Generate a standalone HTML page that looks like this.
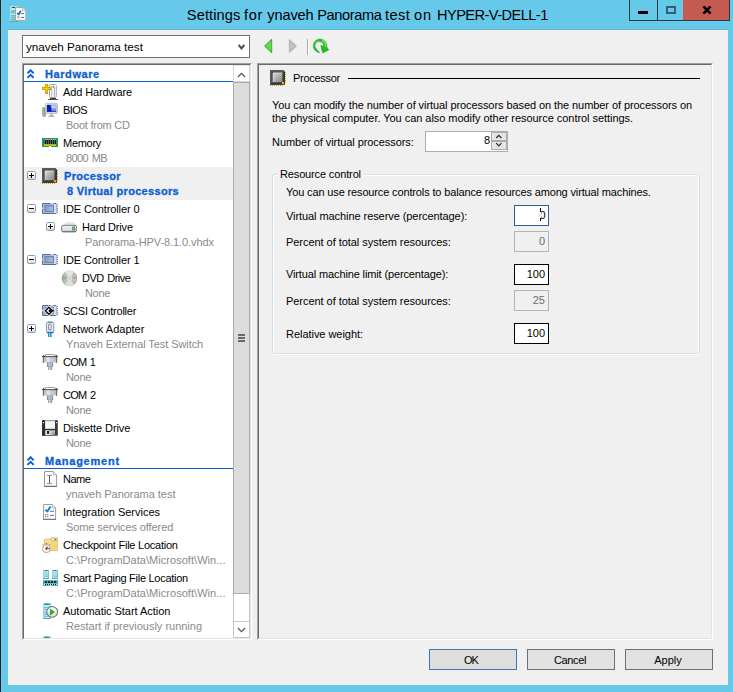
<!DOCTYPE html>
<html>
<head>
<meta charset="utf-8">
<title>Settings for ynaveh Panorama test on HYPER-V-DELL-1</title>
<style>
*{box-sizing:border-box;margin:0;padding:0}
html,body{width:733px;height:692px;overflow:hidden}
body{background:#66c9e9;font-family:"Liberation Sans",sans-serif;font-size:11px;color:#000;position:relative}
.abs{position:absolute}
#lb{left:0;top:0;width:1px;height:692px;background:#2a2222}
#title{left:187px;top:5px;width:364px;height:20px;font-size:14.6px;line-height:20px;white-space:nowrap;color:#000}
#client{left:8px;top:30px;width:720px;height:655px;background:#f0f0f0}
#caps{left:629px;top:0;width:101px;height:21px;border:1px solid #2b3a40;border-top:none}
#cmin{left:0;top:0;width:27px;height:20px}
#cmax{left:27px;top:0;width:26px;height:20px;border-left:1px solid #2b3a40}
#cclose{left:53px;top:0;width:46px;height:20px;background:#c55b50}
#combo{left:22px;top:35px;width:228px;height:23px;background:#fff;border:1px solid #707070}
#combo span{position:absolute;left:3px;top:0;line-height:22px;font-size:11.7px;white-space:nowrap}
#tree{left:22px;top:63px;width:230px;height:577px;background:#fff;border:1px solid #a0a0a0;border-right-color:#fff;border-bottom-color:#fff}
#treein{left:0;top:0;width:228px;height:575px;border:1px solid #696969;border-right-color:#e3e3e3;border-bottom-color:#e3e3e3;overflow:hidden}
.row{position:absolute;left:0;width:209px;height:18px;line-height:18px;white-space:nowrap}
.row.sel{background:#f0f0f0}
.row.sel .lbl,.row.sel .sub{color:#0b60d0;font-weight:bold;letter-spacing:.32px;-webkit-text-stroke:.3px #0b60d0}
.hdr{color:#0b60d0;font-weight:bold;height:17px;border-bottom:1px solid #0f5fcc}
.hdr .lbl{line-height:18px;letter-spacing:.35px;-webkit-text-stroke:.3px #0b60d0}
.lbl{position:absolute;top:0;line-height:18px;white-space:nowrap;letter-spacing:-.15px}
.sub{position:absolute;top:17px;line-height:15px;color:#8a8a8a;white-space:nowrap}
.ico{position:absolute;width:16px;height:16px;top:1px}
.pm{position:absolute;width:9px;height:9px;border:1px solid #7f9dc1;border-radius:1.5px;background:linear-gradient(#fff 45%,#dcd2c0);top:4px}
.pm:before{content:"";position:absolute;left:1px;top:3px;width:5px;height:1px;background:#000}
.pm.plus:after{content:"";position:absolute;left:3px;top:1px;width:1px;height:5px;background:#000}
#sb{left:209px;top:0;width:17px;height:573px;background:#fff;border-left:1px solid #c6c6c6;border-right:1px solid #c6c6c6}
#pane{left:257px;top:63px;width:456px;height:577px;border:1px solid #a0a0a0;border-right-color:#fff;border-bottom-color:#fff}
#panein{left:0;top:0;width:454px;height:575px;border:1px solid #696969;border-right-color:#e3e3e3;border-bottom-color:#e3e3e3}
.t{position:absolute;white-space:nowrap;line-height:14px;height:14px}
.inp{position:absolute;left:514px;width:35px;height:21px;background:#fff;border:1px solid #000;text-align:right;padding-right:3px;line-height:19px}
.inp.dis{background:#f0f0f0;border-color:#b4b4b4;color:#6d6d6d}
.btn{position:absolute;top:649px;width:88px;height:21px;background:#e1e1e1;border:1px solid #707070;text-align:center;line-height:21px}
#grp{left:272px;top:174px;width:428px;height:180px;border:1px solid #d5dfe5;border-radius:3px;box-shadow:inset 1px 1px 0 #fff,inset -1px 0 0 #fff,0 1px 0 #fff}

</style>
</head>
<body>
<div id="lb" class="abs"></div>
<div id="title" class="abs"><span style="position:absolute;left:-0.2px;letter-spacing:0.12px">Settings</span><span style="position:absolute;left:57.1px;letter-spacing:0.60px">for</span><span style="position:absolute;left:80.3px;letter-spacing:-0.13px">ynaveh</span><span style="position:absolute;left:130.2px;letter-spacing:-0.39px">Panorama</span><span style="position:absolute;left:198.0px;letter-spacing:0.44px">test</span><span style="position:absolute;left:226.9px;letter-spacing:0.9px">on</span><span style="position:absolute;left:250.0px;letter-spacing:-0.55px">HYPER-V-DELL-1</span></div>
<div id="caps" class="abs">
  <div id="cmin" class="abs"><div class="abs" style="left:8px;top:11px;width:10px;height:3px;background:#000"></div></div>
  <div id="cmax" class="abs"><div class="abs" style="left:8px;top:6px;width:10px;height:8px;border:2px solid #2e6273"></div></div>
  <div id="cclose" class="abs"><svg class="abs" style="left:19px;top:6px" width="10" height="8" viewBox="0 0 10 8"><path d="M1.4 0.4 L8.6 7.6 M8.6 0.4 L1.4 7.6" stroke="#000" stroke-width="2.5"/></svg></div>
</div>
<div class="abs" style="left:8px;top:29px;width:720px;height:1px;background:#62b6d6"></div>
<div id="client" class="abs"></div>
<svg class="abs" style="left:10px;top:6px" width="16" height="16" viewBox="0 0 16 16">
<rect x="0" y="0" width="7.8" height="16" fill="#a4e2ea"/>
<rect x="2" y="1" width="3.2" height="1" fill="#0e5a62"/>
<g fill="#3fa2aa"><rect x="1" y="4.4" width="6" height="0.9"/><rect x="1" y="6.4" width="6" height="0.9"/><rect x="1" y="9.4" width="6" height="0.9"/><rect x="1" y="11.4" width="6" height="0.9"/><rect x="1" y="13.4" width="6" height="0.9"/></g>
<rect x="1" y="2.8" width="5" height="0.9" fill="#e6f8fa"/><rect x="1" y="7.8" width="5" height="0.9" fill="#d8f4f6"/>
<rect x="0" y="15" width="7.8" height="1" fill="#5aaab2"/>
<path d="M5.6 1.6 H12.6 L15.8 4.8 V14.4 H5.6 Z" fill="#fefefe" stroke="#a29494" stroke-width="0.8"/>
<path d="M12.6 1.6 V4.8 H15.8" fill="#fff" stroke="#a8a0a0" stroke-width="0.8"/>
<path d="M7.4 6.9 L8.7 8.5 L10.8 4.6" fill="none" stroke="#1262b4" stroke-width="1.6" stroke-linejoin="round"/>
<rect x="11" y="7" width="3" height="1" fill="#6868a8"/><rect x="11" y="11" width="3" height="1" fill="#6868a8"/>
<rect x="7.8" y="10.4" width="1.8" height="1.8" fill="#e8e8e8" stroke="#b4b4b4" stroke-width="0.6"/>
</svg>
<svg class="abs" style="left:262px;top:37px" width="70" height="20" viewBox="0 0 70 20">
<path d="M2.6 9 L9.7 2.2 V15.8 Z" fill="#3ec62e" stroke="#2ca61c" stroke-width="0.9" stroke-linejoin="round"/>
<path d="M4.3 9 L8.7 4.8 V13.2 Z" fill="#58d446" stroke="#8be67a" stroke-width="0.7"/>
<path d="M27.3 2.4 L34.5 9 L27.3 15.8 Z" fill="#b8b8b8" stroke="#a8a8a8" stroke-width="0.6" stroke-linejoin="round"/>
<path d="M28.6 5.6 L32.4 9 L28.6 12.6 Z" fill="#c6c6c6"/>
<rect x="45" y="2" width="1" height="16" fill="#aaaaaa"/><rect x="46" y="2" width="1" height="16" fill="#fff"/>
</svg>

<svg class="abs" style="left:308px;top:34px" width="24" height="24" viewBox="0 0 24 24">
<path d="M12.1 18.7 A6.8 6.8 0 1 1 18.8 12.9 L20.7 16 L14.6 18.9 L12.8 11.4 L15.5 12.6 A4.3 4.3 0 1 0 8.7 15.2 Q10 17.6 12.1 18.7 Z" fill="#26ba26" stroke="#159a15" stroke-width="0.5" stroke-linejoin="round"/>
<path d="M13.8 6.5 A5.6 5.6 0 0 1 17.5 12.8" fill="none" stroke="#7df06c" stroke-width="1.5" opacity="0.85"/>
<path d="M6.6 12.6 A5.6 5.6 0 0 1 10.6 6.6" fill="none" stroke="#4fd84a" stroke-width="1" opacity="0.8"/>
</svg>
<div id="combo" class="abs"><span>ynaveh Panorama test</span>
<svg class="abs" style="left:215px;top:8px" width="7" height="7" viewBox="0 0 7 7"><path d="M0.6 0.9 L3.5 4.5 L6.4 0.9" fill="none" stroke="#4a4a4a" stroke-width="2"/></svg>
</div>

<div id="tree" class="abs"><div id="treein" class="abs">
<div class="row hdr" style="top:0px"><svg class="abs" style="left:3px;top:4px" width="8" height="10" viewBox="0 0 8 10"><path d="M0.5 4.4 L3.6 1.3 L6.7 4.4 M0.5 8.9 L3.6 5.8 L6.7 8.9" fill="none" stroke="#0b60d0" stroke-width="2"/></svg><span class="lbl" style="left:21px;letter-spacing:0.583px">Hardware</span></div>
<div class="row" style="top:18px;height:18px"><svg class="ico" style="left:18px" width="16" height="16" viewBox="0 0 16 16">
<rect x="7.5" y="0.5" width="6.8" height="13" rx="0.8" fill="#fafafa" stroke="#a8a8a8"/>
<rect x="9" y="2" width="1" height="11" fill="#c4c4c4"/><rect x="12" y="3" width="1" height="10" fill="#b4b4b4"/><rect x="10" y="4" width="2" height="9" fill="#ededf2"/>
<rect x="10.4" y="1.8" width="1.7" height="1.9" fill="#58c030"/>
<rect x="8" y="14" width="6" height="1" fill="#3a3a3a"/><rect x="6" y="15" width="10" height="1" fill="#555"/>
<path d="M4.5 0.6 V8.4 M0.6 4.5 H8" stroke="#b89208" stroke-width="3.2" stroke-linecap="round"/>
<path d="M4.5 1 V8 M1 4.5 H7.6" stroke="#fbd10c" stroke-width="1.7" stroke-linecap="round"/>
</svg><span class="lbl" style="left:39px;letter-spacing:-0.109px">Add Hardware</span></div>
<div class="row" style="top:36px;height:33px"><svg class="ico" style="left:18px" width="16" height="16" viewBox="0 0 16 16">
<rect x="0.6" y="5.4" width="2.9" height="9.2" rx="1.2" fill="#cfcfcf" stroke="#8e8e8e" stroke-width="0.8"/>
<rect x="1.7" y="6.2" width="1" height="7.4" fill="#7a7a7a"/>
<rect x="1" y="7.9" width="2.2" height="1.3" fill="#30e830"/>
<rect x="8.4" y="11" width="2.4" height="2.6" fill="#bdbdbd"/>
<path d="M6.2 15 L7.6 13.3 H11.4 L12.8 15 Z" fill="#b0b0b0"/>
<rect x="3.6" y="1.4" width="12" height="10" rx="1" fill="#dedad0" stroke="#bcb8ae" stroke-width="0.8"/>
<rect x="4.9" y="2.9" width="9.2" height="6.9" fill="#0a18c8"/>
<path d="M8.6 2.9 H14.1 V9.8 H9.8 Z" fill="#6f9cf0"/>
<path d="M9.3 3.3 H13.8 V6.2 H10 Z" fill="#b8d0fa"/>
<rect x="4.9" y="8.8" width="9.2" height="1" fill="#0810a0" opacity="0.6"/>
</svg><span class="lbl" style="left:39px;letter-spacing:-0.572px">BIOS</span><span class="sub" style="left:42px;letter-spacing:-0.252px">Boot from CD</span></div>
<div class="row" style="top:69px;height:33px"><svg class="ico" style="left:18px" width="16" height="16" viewBox="0 0 16 16">
<path d="M0 3 H16 V12 H9.2 L8.6 10.7 H7.4 L6.8 12 H0 Z" fill="#1b9b5c"/>
<rect x="2.2" y="5" width="11.8" height="4.2" fill="#8c8c8c"/>
<g fill="#050505"><rect x="2.7" y="4.8" width="1.2" height="4.4"/><rect x="4.7" y="4.8" width="1.2" height="4.4"/><rect x="6.7" y="4.8" width="1.2" height="4.4"/><rect x="8.7" y="4.8" width="1.2" height="4.4"/><rect x="10.7" y="4.8" width="1.2" height="4.4"/><rect x="12.7" y="4.8" width="1.2" height="4.4"/></g>
<g fill="#e8f4ec"><rect x="2.8" y="4" width="1" height="0.9"/><rect x="4.8" y="4" width="1" height="0.9"/><rect x="6.8" y="4" width="1" height="0.9"/><rect x="8.8" y="4" width="1" height="0.9"/><rect x="10.8" y="4" width="1" height="0.9"/><rect x="12.8" y="4" width="1" height="0.9"/></g>
<path d="M2 9.2 H14 V11 H9.2 L8.6 10.2 H7.4 L6.8 11 H2 Z" fill="#f2b81c"/>
</svg><span class="lbl" style="left:39px;letter-spacing:-0.287px">Memory</span><span class="sub" style="left:42px;letter-spacing:-0.589px;word-spacing:1.1px">8000 MB</span></div>
<div class="row sel" style="top:102px;height:33px"><i class="pm plus" style="left:3px"></i><svg class="ico" style="left:18px" width="16" height="16" viewBox="0 0 16 16">
<linearGradient id="gcpu4" x1="0" y1="0" x2="1" y2="1"><stop offset="0" stop-color="#dcdcdc"/><stop offset="1" stop-color="#848484"/></linearGradient>
<path d="M0 0 H13.2 L15 1.8 V14.7 H0 Z" fill="#4c4c4c"/>
<path d="M0 0 H13.2 L15 1.8 H1.5 V14.7 H0 Z" fill="#595959"/>
<path d="M0 14.7 H15 V1.8 L13.4 3.4 V13.2 H1.5 Z" fill="#303030"/>
<rect x="2.9" y="2.7" width="9.4" height="9.4" fill="url(#gcpu4)"/>
<path d="M3.2 12 V3 H12.2" fill="none" stroke="#ececec" stroke-width="0.7" opacity="0.8"/>
<rect x="12" y="12" width="2.3" height="2.3" fill="#f2a21e"/>
<g fill="#e39c1a"><rect x="0" y="15" width="1" height="1"/><rect x="2" y="15" width="1" height="1"/><rect x="4" y="15" width="1" height="1"/><rect x="6" y="15" width="1" height="1"/><rect x="8" y="15" width="1" height="1"/><rect x="10" y="15" width="1" height="1"/><rect x="12" y="15" width="1" height="1"/><rect x="15" y="2" width="1" height="1"/><rect x="15" y="4" width="1" height="1"/><rect x="15" y="6" width="1" height="1"/><rect x="15" y="8" width="1" height="1"/><rect x="15" y="10" width="1" height="1"/><rect x="15" y="12" width="1" height="1"/></g>
</svg><span class="lbl" style="left:40px;letter-spacing:0.332px">Processor</span><span class="sub" style="left:43px;letter-spacing:0.322px">8 Virtual processors</span></div>
<div class="row" style="top:135px;height:18px"><i class="pm minus" style="left:3px"></i><svg class="ico" style="left:18px" width="16" height="16" viewBox="0 0 16 16">
<rect x="0.5" y="2.5" width="14" height="10" fill="#a9bbd7"/>
<rect x="12" y="3" width="2.6" height="9.5" fill="#dbe3f0"/>
<path d="M0.5 6.4 V2.5 H8.6 M11.4 2.5 H14.2 M14.2 12.5 H0.5 V8.2" fill="none" stroke="#51709f" stroke-width="1"/>
<path d="M14.4 3 V12" stroke="#9db0cf" stroke-width="0.9"/>
<g fill="#5272a6"><rect x="15" y="3.2" width="1" height="0.9"/><rect x="15" y="5.2" width="1" height="0.9"/><rect x="15" y="7.2" width="1" height="0.9"/><rect x="15" y="9.2" width="1" height="0.9"/><rect x="15" y="11.2" width="1" height="0.9"/></g>

<linearGradient id="gide5" x1="0" y1="0" x2="1" y2="0.3"><stop offset="0" stop-color="#869dc2"/><stop offset="1" stop-color="#a9bbd7"/></linearGradient>
<rect x="3" y="4.6" width="8.5" height="5.8" fill="url(#gide5)" stroke="#6682ae" stroke-width="1"/>
</svg><span class="lbl" style="left:39px;letter-spacing:-0.116px">IDE Controller 0</span></div>
<div class="row" style="top:153px;height:33px"><i class="pm plus" style="left:22px"></i><svg class="ico" style="left:37px" width="16" height="16" viewBox="0 0 16 16">
<path d="M3.6 6.2 Q4.2 3.9 5.6 3.9 H12.4 Q13.8 3.9 14.4 6.2 Z" fill="#f4f4f7" stroke="#c9c9d0" stroke-width="0.7"/>
<rect x="0.5" y="6.3" width="15.2" height="6.4" rx="1.8" fill="#d2d2e0" stroke="#7e7e88" stroke-width="1"/>
<rect x="1.4" y="7" width="13.4" height="2.2" rx="0.8" fill="#efeff6"/>
<rect x="2" y="8.4" width="9" height="2.6" fill="#e2e2f0"/>
<path d="M1.4 12.8 H14.8" stroke="#62626c" stroke-width="0.8"/>
<rect x="11.2" y="7.5" width="2.9" height="4" fill="#787882"/>
<rect x="12" y="7.7" width="1.3" height="3.6" fill="#34e222"/>
</svg><span class="lbl" style="left:58px;letter-spacing:-0.167px">Hard Drive</span><span class="sub" style="left:61px;letter-spacing:-0.08px">Panorama-HPV-8.1.0.vhdx</span></div>
<div class="row" style="top:186px;height:18px"><i class="pm minus" style="left:3px"></i><svg class="ico" style="left:18px" width="16" height="16" viewBox="0 0 16 16">
<rect x="0.5" y="2.5" width="14" height="10" fill="#a9bbd7"/>
<rect x="12" y="3" width="2.6" height="9.5" fill="#dbe3f0"/>
<path d="M0.5 6.4 V2.5 H8.6 M11.4 2.5 H14.2 M14.2 12.5 H0.5 V8.2" fill="none" stroke="#51709f" stroke-width="1"/>
<path d="M14.4 3 V12" stroke="#9db0cf" stroke-width="0.9"/>
<g fill="#5272a6"><rect x="15" y="3.2" width="1" height="0.9"/><rect x="15" y="5.2" width="1" height="0.9"/><rect x="15" y="7.2" width="1" height="0.9"/><rect x="15" y="9.2" width="1" height="0.9"/><rect x="15" y="11.2" width="1" height="0.9"/></g>

<linearGradient id="gide7" x1="0" y1="0" x2="1" y2="0.3"><stop offset="0" stop-color="#869dc2"/><stop offset="1" stop-color="#a9bbd7"/></linearGradient>
<rect x="3" y="4.6" width="8.5" height="5.8" fill="url(#gide7)" stroke="#6682ae" stroke-width="1"/>
</svg><span class="lbl" style="left:39px;letter-spacing:-0.116px">IDE Controller 1</span></div>
<div class="row" style="top:204px;height:33px"><svg class="ico" style="left:37px" width="16" height="16" viewBox="0 0 16 16">
<circle cx="8.5" cy="8.4" r="7.4" fill="#bebebe" stroke="#9c9c9c" stroke-width="0.8"/>
<path d="M8.5 8.4 L4.2 2.2 A7.6 7.6 0 0 1 12.8 2.2 Z" fill="#ebebeb" opacity="0.85"/>
<path d="M8.5 8.4 L12.8 14.6 A7.6 7.6 0 0 1 4.2 14.6 Z" fill="#e6e6e6" opacity="0.85"/>
<path d="M8.5 8.4 L15.9 6 A7.6 7.6 0 0 1 15.9 10.8 Z" fill="#9e9e9e" opacity="0.55"/>
<path d="M8.5 8.4 L1.1 10.8 A7.6 7.6 0 0 1 1.1 6 Z" fill="#a4a4a4" opacity="0.45"/>
<path d="M8.5 8.4 L1.5 5.4 A7.6 7.6 0 0 0 1 7.8 Z" fill="#66dc1c" opacity="0.95"/>
<path d="M8.5 8.4 L1 8 L1.2 9.2 Z" fill="#4ab8e0" opacity="0.6"/>
<path d="M8.5 8.4 L15.6 9.6 L15.2 10.8 Z" fill="#f0d6a0" opacity="0.9"/>
<circle cx="8.5" cy="8.4" r="2.5" fill="#f2f2f2" stroke="#cfcfcf" stroke-width="0.5"/>
<circle cx="8.5" cy="8.4" r="1" fill="#fff" stroke="#8e8e8e" stroke-width="0.6"/>
</svg><span class="lbl" style="left:58px;letter-spacing:-0.527px;word-spacing:1.1px">DVD Drive</span><span class="sub" style="left:61px;letter-spacing:-0.324px">None</span></div>
<div class="row" style="top:237px;height:18px"><svg class="ico" style="left:18px" width="16" height="16" viewBox="0 0 16 16">
<rect x="0.5" y="2.5" width="14" height="10" fill="#a9bbd7"/>
<rect x="12" y="3" width="2.6" height="9.5" fill="#dbe3f0"/>
<path d="M0.5 6.4 V2.5 H8.6 M11.4 2.5 H14.2 M14.2 12.5 H0.5 V8.2" fill="none" stroke="#51709f" stroke-width="1"/>
<path d="M14.4 3 V12" stroke="#9db0cf" stroke-width="0.9"/>
<g fill="#5272a6"><rect x="15" y="3.2" width="1" height="0.9"/><rect x="15" y="5.2" width="1" height="0.9"/><rect x="15" y="7.2" width="1" height="0.9"/><rect x="15" y="9.2" width="1" height="0.9"/><rect x="15" y="11.2" width="1" height="0.9"/></g>

<rect x="3" y="4.6" width="8.5" height="5.8" fill="#b4c4de" stroke="#7c96c0" stroke-width="1"/>
<path d="M6.9 3.6 L10.8 7.75 L6.9 11.9 L3 7.75 Z" fill="#fff" stroke="#fff" stroke-width="2"/>
<path d="M6.9 4.2 L10.4 7.75 L6.9 11.3 L3.4 7.75 Z" fill="#fff" stroke="#000" stroke-width="1.3"/>
<circle cx="7.8" cy="7.8" r="1.2" fill="#000"/><rect x="8" y="7.2" width="4.2" height="1.2" fill="#000"/>
</svg><span class="lbl" style="left:39px;letter-spacing:-0.214px">SCSI Controller</span></div>
<div class="row" style="top:255px;height:33px"><i class="pm plus" style="left:3px"></i><svg class="ico" style="left:18px" width="16" height="16" viewBox="0 0 16 16">
<rect x="6" y="0.4" width="4" height="2" rx="0.6" fill="#f4f6fa" stroke="#8a96aa" stroke-width="0.8"/>
<rect x="4.4" y="1.5" width="7.4" height="10" rx="0.8" fill="#e6ecf8" stroke="#7a88a0" stroke-width="0.9"/>
<rect x="5.5" y="9.2" width="5.2" height="1.8" fill="#b8d0f4"/>
<rect x="6.6" y="3.2" width="2.5" height="5.4" rx="0.4" fill="#fafbfe" stroke="#6e7688" stroke-width="0.85"/>
<rect x="5" y="11.2" width="6.4" height="1" fill="#3a4a68"/>
<rect x="6" y="12.2" width="1.4" height="3.8" fill="#0a8ed0"/><rect x="8.1" y="12.2" width="1.5" height="3.8" fill="#0a8ed0"/>
</svg><span class="lbl" style="left:39px;letter-spacing:0.005px">Network Adapter</span><span class="sub" style="left:42px;letter-spacing:-0.078px">Ynaveh External Test Switch</span></div>
<div class="row" style="top:288px;height:33px"><svg class="ico" style="left:18px" width="16" height="16" viewBox="0 0 16 16">
<rect x="0.8" y="0.8" width="1.6" height="8" fill="#6a727c"/><rect x="13.6" y="0.8" width="1.6" height="8" fill="#6a727c"/>
<rect x="0" y="2" width="3.4" height="1.1" fill="#454a52"/><rect x="12.8" y="2" width="3.2" height="1.1" fill="#454a52"/>
<rect x="3.4" y="0.4" width="9.4" height="2.2" rx="0.8" fill="#fcfcfc" stroke="#7c7c7c" stroke-width="0.8"/>
<rect x="3.2" y="2.1" width="9.8" height="1.1" fill="#505050"/>
<path d="M3.3 3.2 H12.9 V5.6 Q12.9 8 10.6 8.8 H5.6 Q3.3 8 3.3 5.6 Z" fill="#c4ccd6" stroke="#8c949e" stroke-width="0.6"/>
<path d="M4.2 3.6 H8 V8.2 H5.8 Q4.2 7.4 4.2 5.6 Z" fill="#e4e8ee" opacity="0.8"/>
<rect x="4.9" y="8.8" width="6.2" height="4.2" fill="#7c8a9a"/>
<rect x="5.8" y="9.5" width="4.4" height="0.9" fill="#f0f2f4"/><rect x="5.8" y="11.4" width="4.4" height="0.9" fill="#e4e8ec"/>
<rect x="6" y="13" width="4.2" height="3" fill="#98a2ae"/><rect x="7.2" y="13" width="1" height="3" fill="#f4f4f6"/>
</svg><span class="lbl" style="left:39px;letter-spacing:-0.747px;word-spacing:1.1px">COM 1</span><span class="sub" style="left:42px;letter-spacing:-0.324px">None</span></div>
<div class="row" style="top:321px;height:33px"><svg class="ico" style="left:18px" width="16" height="16" viewBox="0 0 16 16">
<rect x="0.8" y="0.8" width="1.6" height="8" fill="#6a727c"/><rect x="13.6" y="0.8" width="1.6" height="8" fill="#6a727c"/>
<rect x="0" y="2" width="3.4" height="1.1" fill="#454a52"/><rect x="12.8" y="2" width="3.2" height="1.1" fill="#454a52"/>
<rect x="3.4" y="0.4" width="9.4" height="2.2" rx="0.8" fill="#fcfcfc" stroke="#7c7c7c" stroke-width="0.8"/>
<rect x="3.2" y="2.1" width="9.8" height="1.1" fill="#505050"/>
<path d="M3.3 3.2 H12.9 V5.6 Q12.9 8 10.6 8.8 H5.6 Q3.3 8 3.3 5.6 Z" fill="#c4ccd6" stroke="#8c949e" stroke-width="0.6"/>
<path d="M4.2 3.6 H8 V8.2 H5.8 Q4.2 7.4 4.2 5.6 Z" fill="#e4e8ee" opacity="0.8"/>
<rect x="4.9" y="8.8" width="6.2" height="4.2" fill="#7c8a9a"/>
<rect x="5.8" y="9.5" width="4.4" height="0.9" fill="#f0f2f4"/><rect x="5.8" y="11.4" width="4.4" height="0.9" fill="#e4e8ec"/>
<rect x="6" y="13" width="4.2" height="3" fill="#98a2ae"/><rect x="7.2" y="13" width="1" height="3" fill="#f4f4f6"/>
</svg><span class="lbl" style="left:39px;letter-spacing:-0.707px;word-spacing:1.1px">COM 2</span><span class="sub" style="left:42px;letter-spacing:-0.324px">None</span></div>
<div class="row" style="top:354px;height:33px"><svg class="ico" style="left:18px" width="16" height="16" viewBox="0 0 16 16">
<rect x="0.2" y="0.2" width="15.6" height="15.6" rx="0.8" fill="#3a3a3a"/>
<rect x="0.2" y="0.2" width="2.4" height="15.6" fill="#2c2c2c"/>
<rect x="3.1" y="0.7" width="9.9" height="8.1" fill="#f6f6f6"/>
<rect x="3.1" y="0.7" width="9.9" height="0.7" fill="#c8c8c8"/>
<rect x="0.9" y="2" width="1.1" height="1.1" fill="#fff"/><rect x="14" y="2" width="1.1" height="1.1" fill="#fff"/>
<rect x="0.9" y="0.9" width="1.1" height="1" fill="#000"/><rect x="14" y="0.9" width="1.1" height="1" fill="#000"/>
<rect x="3.5" y="10.4" width="9.5" height="4.6" fill="#c8c8c8"/>
<rect x="3.5" y="10.4" width="4" height="4.6" fill="#ececec"/><rect x="10" y="12.4" width="3" height="2.6" fill="#a0a0a0"/>
<rect x="5" y="11" width="2" height="2.8" fill="#101010"/>
</svg><span class="lbl" style="left:39px;letter-spacing:-0.083px">Diskette Drive</span><span class="sub" style="left:42px;letter-spacing:-0.324px">None</span></div>
<div class="row hdr" style="top:387px"><svg class="abs" style="left:3px;top:4px" width="8" height="10" viewBox="0 0 8 10"><path d="M0.5 4.4 L3.6 1.3 L6.7 4.4 M0.5 8.9 L3.6 5.8 L6.7 8.9" fill="none" stroke="#0b60d0" stroke-width="2"/></svg><span class="lbl" style="left:21px;letter-spacing:0.756px">Management</span></div>
<div class="row" style="top:405px;height:33px"><svg class="ico" style="left:18px" width="16" height="16" viewBox="0 0 16 16">
<path d="M2.5 0.5 H11.3 L14.6 3.8 V15.4 H2.5 Z" fill="#fdfdfd" stroke="#9a9a9a" stroke-width="1"/>
<path d="M2.2 15.4 H14.9" stroke="#6e6e6e" stroke-width="1.1"/>
<path d="M11.3 0.5 V3.8 H14.6" fill="#fff" stroke="#a8a8a8" stroke-width="0.9"/>
<path d="M7.5 4.6 V12.4" stroke="#505050" stroke-width="0.95"/>
<path d="M5.2 4.4 H6.6 L7.5 5 L8.4 4.4 H9.8 M5.2 12.6 H6.6 L7.5 12 L8.4 12.6 H9.8" fill="none" stroke="#666" stroke-width="0.9"/>
</svg><span class="lbl" style="left:39px;letter-spacing:-0.511px">Name</span><span class="sub" style="left:42px;letter-spacing:-0.033px">ynaveh Panorama test</span></div>
<div class="row" style="top:438px;height:33px"><svg class="ico" style="left:18px" width="16" height="16" viewBox="0 0 16 16">
<path d="M1.5 0.5 H10.3 L13.6 3.8 V15.4 H1.5 Z" fill="#fdfdfd" stroke="#9c9c9c" stroke-width="1"/>
<path d="M1.2 15.4 H13.9" stroke="#727272" stroke-width="1.1"/>
<path d="M10.3 0.5 V3.8 H13.6" fill="#fff" stroke="#a8a8a8" stroke-width="0.9"/>
<path d="M3.4 5.6 L5.4 7.6 L8.4 2.6" fill="none" stroke="#1280c4" stroke-width="1.9" stroke-linejoin="round"/>
<rect x="8" y="6.8" width="4" height="1.1" fill="#7676aa"/><rect x="8" y="10.8" width="4" height="1.1" fill="#7676aa"/>
<rect x="3.4" y="10.4" width="2.4" height="2.4" fill="#fff" stroke="#a6a6a6" stroke-width="0.9"/>
</svg><span class="lbl" style="left:39px;letter-spacing:-0.011px">Integration Services</span><span class="sub" style="left:42px;letter-spacing:-0.097px">Some services offered</span></div>
<div class="row" style="top:471px;height:33px"><svg class="ico" style="left:18px" width="16" height="16" viewBox="0 0 16 16">
<path d="M8.8 1.2 Q8.8 0.8 9.4 0.8 H15.2 Q15.9 0.8 15.9 1.4 V4 H8.8 Z" fill="#f4d888" stroke="#d8b04a" stroke-width="0.7"/>
<path d="M2.4 3 Q2.4 2.2 3.2 2.2 H8.4 L9.4 3.6 H15.9 V13.6 H2.4 Z" fill="#f6de98" stroke="#d8b04a" stroke-width="0.7"/>
<rect x="9" y="4.2" width="6.4" height="8.8" fill="#f2d27c" opacity="0.8"/>
<rect x="10.2" y="1.9" width="2.2" height="1.3" fill="#fff"/><rect x="12.2" y="1.9" width="2" height="1.3" fill="#3a8ee8"/>
<rect x="3.6" y="6.3" width="1.6" height="1.4" fill="#4a4a4a"/>
<path d="M0.6 7.4 L1.8 8.6 M8 7.4 L7 8.4" stroke="#555" stroke-width="0.9"/>
<circle cx="4.4" cy="11.6" r="4" fill="#fcfcfc" stroke="#9a9a9a" stroke-width="0.9"/>
<path d="M4.4 11.6 L4.4 9.2 A2.4 2.4 0 0 1 6.6 10.8 Z" fill="#20b838"/>
<path d="M4.4 10.2 V13.2 M3 11.7 H7.8" stroke="#d82020" stroke-width="1"/>
</svg><span class="lbl" style="left:39px;letter-spacing:-0.24px">Checkpoint File Location</span><span class="sub" style="left:42px;letter-spacing:0.038px">C:\ProgramData\Microsoft\Win...</span></div>
<div class="row" style="top:504px;height:33px"><svg class="ico" style="left:18px" width="16" height="16" viewBox="0 0 16 16"><rect x="1" y="0" width="6" height="8.8" fill="#6ec2d2"/><rect x="1" y="0" width="0.7" height="8.8" fill="#a8e0ec"/><rect x="1" y="8.0" width="6" height="0.8" fill="#48a6ba"/><rect x="2.7" y="0.1" width="2.6" height="0.85" fill="#1c6e78"/><rect x="2" y="1.4" width="4" height="1" fill="#f2fbfd"/><rect x="2" y="3.4" width="4" height="1" fill="#e2f6fa"/><rect x="2" y="5.4" width="4" height="0.9" fill="#c4ecf2"/><rect x="2" y="7.0" width="4" height="0.9" fill="#bce8ee"/><rect x="10" y="0" width="6" height="8.8" fill="#6ec2d2"/><rect x="10" y="0" width="0.7" height="8.8" fill="#a8e0ec"/><rect x="10" y="8.0" width="6" height="0.8" fill="#48a6ba"/><rect x="11.7" y="0.1" width="2.6" height="0.85" fill="#1c6e78"/><rect x="11" y="1.4" width="4" height="1" fill="#f2fbfd"/><rect x="11" y="3.4" width="4" height="1" fill="#e2f6fa"/><rect x="11" y="5.4" width="4" height="0.9" fill="#c4ecf2"/><rect x="11" y="7.0" width="4" height="0.9" fill="#bce8ee"/>
<path d="M1 10.2 H16 V15.9 H9.3 L8.7 15 H8 L7.4 15.9 H1 Z" fill="#38a4ae"/>
<rect x="1.6" y="13.6" width="13.8" height="1.6" fill="#b4e6ea"/>
<g fill="#2c1414"><rect x="3.1" y="11.1" width="1.8" height="1.9"/><rect x="6.1" y="11.1" width="1.8" height="1.9"/><rect x="9.1" y="11.1" width="1.8" height="1.9"/><rect x="12.1" y="11.1" width="1.8" height="1.9"/>
<rect x="3" y="14" width="1" height="1"/><rect x="5" y="14" width="1" height="1"/><rect x="7" y="14" width="1" height="1"/><rect x="9" y="14" width="1" height="1"/><rect x="11" y="14" width="1" height="1"/><rect x="13" y="14" width="1" height="1"/></g>
</svg><span class="lbl" style="left:39px;letter-spacing:-0.276px">Smart Paging File Location</span><span class="sub" style="left:42px;letter-spacing:0.038px">C:\ProgramData\Microsoft\Win...</span></div>
<div class="row" style="top:537px;height:33px"><svg class="ico" style="left:18px" width="16" height="16" viewBox="0 0 16 16"><rect x="1" y="0" width="7.8" height="15.8" fill="#70c4d8"/><rect x="1" y="0" width="0.7" height="15.8" fill="#a8e0ec"/><rect x="1" y="15.0" width="7.8" height="0.8" fill="#48a6ba"/><rect x="2.7" y="1" width="4.4" height="0.85" fill="#1c6e78"/><rect x="2" y="2.2" width="5.8" height="1.4" fill="#eefafd"/><rect x="2" y="5.1" width="5.8" height="0.9" fill="#bfe8f2"/><rect x="2" y="7.3" width="5.8" height="1.1" fill="#e6f6fb"/><rect x="2" y="10.1" width="5.8" height="0.9" fill="#b8e4f0"/><rect x="2" y="12.2" width="5.8" height="0.9" fill="#b8e4f0"/><rect x="2" y="14" width="5.8" height="0.9" fill="#cdeef6"/>
<circle cx="10.2" cy="8.9" r="5.4" fill="#e4e4e4" stroke="#747474" stroke-width="1.05"/>
<path d="M5.6 8.9 A4.7 4.7 0 0 1 14.8 8.4 Z" fill="#fff" opacity="0.8"/>
<path d="M8.3 5.9 L12.4 9 L8.3 12.1 Z" fill="#14b414" stroke="#0c9c0c" stroke-width="0.5" stroke-linejoin="round"/>
</svg><span class="lbl" style="left:39px;letter-spacing:-0.042px">Automatic Start Action</span><span class="sub" style="left:42px;letter-spacing:-0.012px">Restart if previously running</span></div>
<div class="row" style="top:570px;height:18px"><svg class="ico" style="left:18px" width="16" height="16" viewBox="0 0 16 16"><rect x="1" y="0" width="7.8" height="3" fill="#8ad2e0"/><rect x="2.7" y="1" width="4.4" height="0.85" fill="#1c6e78"/></svg></div>
<div id="sb" class="abs">
  <div class="abs" style="left:-1px;top:0;width:17px;height:17px;background:#fff;border:1px solid #d4d4d4;border-top-color:#e8e8e8"></div>
  <svg class="abs" style="left:3px;top:7px" width="9" height="6" viewBox="0 0 9 6"><path d="M0.9 5 L4.5 1.4 L8.1 5" fill="none" stroke="#585858" stroke-width="1.25"/></svg>
  <div class="abs" style="left:-1px;top:17px;width:17px;height:512px;background:#dcdcdc;border:1px solid #ababab"></div>
  <div class="abs" style="left:4px;top:269px;width:7px;height:2px;background:#6a6a6a;box-shadow:0 3px 0 #6a6a6a,0 6px 0 #6a6a6a"></div>
  <div class="abs" style="left:-1px;top:556px;width:17px;height:17px;background:#fff;border:1px solid #c8c8c8"></div>
  <svg class="abs" style="left:3px;top:561.5px" width="9" height="6" viewBox="0 0 9 6"><path d="M0.9 1 L4.5 4.6 L8.1 1" fill="none" stroke="#585858" stroke-width="1.25"/></svg>
</div>
</div></div>

<div id="pane" class="abs"><div id="panein" class="abs"></div></div>

<svg class="abs" style="left:270px;top:70px" width="16" height="16" viewBox="0 0 16 16">
<linearGradient id="gcpu21" x1="0" y1="0" x2="1" y2="1"><stop offset="0" stop-color="#dcdcdc"/><stop offset="1" stop-color="#848484"/></linearGradient>
<path d="M0 0 H13.2 L15 1.8 V14.7 H0 Z" fill="#4c4c4c"/>
<path d="M0 0 H13.2 L15 1.8 H1.5 V14.7 H0 Z" fill="#595959"/>
<path d="M0 14.7 H15 V1.8 L13.4 3.4 V13.2 H1.5 Z" fill="#303030"/>
<rect x="2.9" y="2.7" width="9.4" height="9.4" fill="url(#gcpu21)"/>
<path d="M3.2 12 V3 H12.2" fill="none" stroke="#ececec" stroke-width="0.7" opacity="0.8"/>
<rect x="12" y="12" width="2.3" height="2.3" fill="#f2a21e"/>
<g fill="#e39c1a"><rect x="0" y="15" width="1" height="1"/><rect x="2" y="15" width="1" height="1"/><rect x="4" y="15" width="1" height="1"/><rect x="6" y="15" width="1" height="1"/><rect x="8" y="15" width="1" height="1"/><rect x="10" y="15" width="1" height="1"/><rect x="12" y="15" width="1" height="1"/><rect x="15" y="2" width="1" height="1"/><rect x="15" y="4" width="1" height="1"/><rect x="15" y="6" width="1" height="1"/><rect x="15" y="8" width="1" height="1"/><rect x="15" y="10" width="1" height="1"/><rect x="15" y="12" width="1" height="1"/></g>
</svg>
<div class="t" style="left:293px;top:71px;letter-spacing:-.28px">Processor</div>
<div class="abs" style="left:348px;top:78px;width:352px;height:1px;background:#000"></div>
<div class="t" style="left:272px;top:98px;letter-spacing:-0.076px">You can modify the number of virtual processors based on the number of processors on</div>
<div class="t" style="left:272px;top:111px;letter-spacing:-0.045px">the physical computer. You can also modify other resource control settings.</div>
<div class="t" style="left:272px;top:135px;letter-spacing:-0.065px">Number of virtual processors:</div>
<div class="abs" style="left:425px;top:131px;width:83px;height:21px;background:#fff;border:1px solid #abadb3"></div>
<div class="t" style="left:484px;top:133px">8</div>
<div class="abs" style="left:491px;top:132px;width:16px;height:9px;background:#e5e5e5;border:1px solid #acacac"></div>
<div class="abs" style="left:491px;top:141px;width:16px;height:9px;background:#e5e5e5;border:1px solid #acacac"></div>
<svg class="abs" style="left:495px;top:134px" width="8" height="14" viewBox="0 0 8 14"><path d="M1.2 4 L3.8 1.3 L6.4 4 M1.2 9.2 L3.8 11.9 L6.4 9.2" fill="none" stroke="#2a2a2a" stroke-width="1.2"/></svg>

<div id="grp" class="abs"></div>
<div class="t" style="left:278px;top:167px;background:#f0f0f0;padding:0 2px;letter-spacing:-0.14px">Resource control</div>
<div class="t" style="left:286px;top:185px;letter-spacing:-0.14px">You can use resource controls to balance resources among virtual machines.</div>
<div class="t" style="left:286px;top:209px;letter-spacing:-0.07px">Virtual machine reserve (percentage):</div>
<div class="t" style="left:286px;top:235px;letter-spacing:-0.045px">Percent of total system resources:</div>
<div class="t" style="left:286px;top:267px;letter-spacing:-0.13px">Virtual machine limit (percentage):</div>
<div class="t" style="left:286px;top:294px;letter-spacing:-0.045px">Percent of total system resources:</div>
<div class="t" style="left:286px;top:327px;letter-spacing:-0.04px">Relative weight:</div>
<div class="inp" style="top:205px;border-color:#2b6092;padding-right:2.5px">0</div>
<div class="abs" style="left:540px;top:208px;width:1px;height:13px;background:#000"></div><div class="abs" style="left:540px;top:212px;width:1px;height:6px;background:#eef8f0"></div>
<div class="inp dis" style="top:231px">0</div>
<div class="inp" style="top:264px">100</div>
<div class="inp dis" style="top:290px">25</div>
<div class="inp" style="top:323px">100</div>

<div class="btn" style="left:429px;border-color:#3a7ab6;letter-spacing:-1px;padding-right:4px;background:#dedede">OK</div>
<div class="btn" style="left:527px;letter-spacing:-.35px;padding-right:2px">Cancel</div>
<div class="btn" style="left:625px;padding-right:2px">Apply</div>

</body>
</html>
